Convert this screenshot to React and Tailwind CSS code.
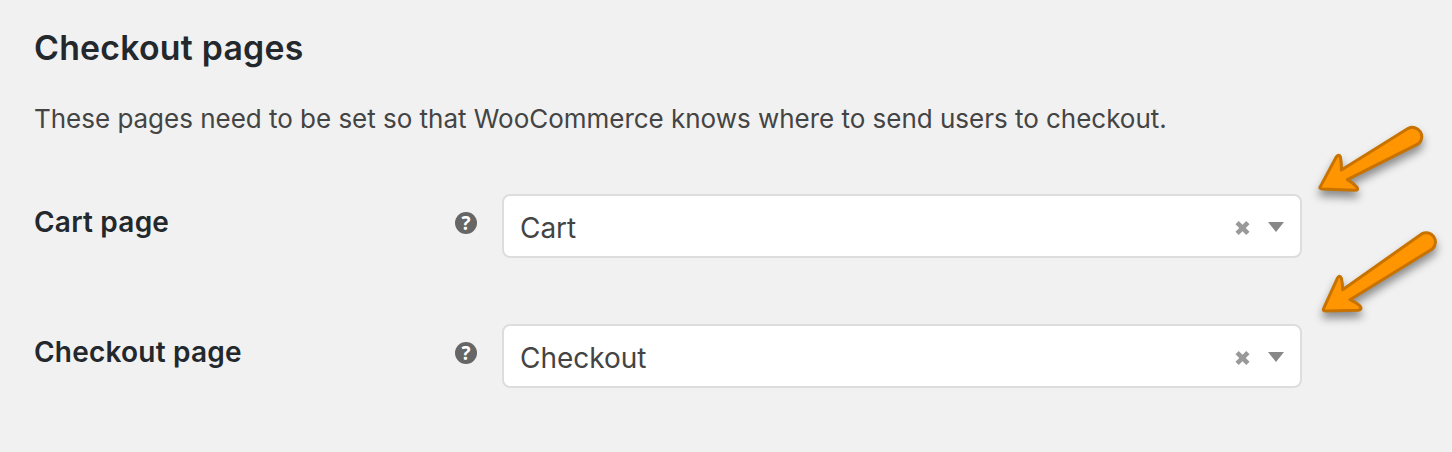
const rows = [
  { label: 'Cart page', value: 'Cart' },
  { label: 'Checkout page', value: 'Checkout' },
];

function HelpTip() {
  return (
    <span className="flex size-[22px] shrink-0 items-center justify-center rounded-full bg-[#666] font-['Open_Sans',sans-serif] text-[19px] leading-[22px] font-bold text-white">
      ?
    </span>
  );
}

function PageSelect({ value }) {
  return (
    <div className="flex h-16 w-[800px] shrink-0 items-center rounded-lg border-2 border-[#ddd] bg-white pl-4 pr-4">
      <span className="grow pt-1 text-[28px] leading-9 tracking-[-0.03px] text-[#444]">{value}</span>
      <svg className="mt-[3px] mr-[17px] h-4 w-4" viewBox="0 0 16 16" aria-label="Clear">
        <path d="M2.1 2.6L12.9 13.4M12.9 2.6L2.1 13.4" fill="none" stroke="#999" strokeWidth="4.6" />
      </svg>
      <svg className="mt-[2px] h-[10px] w-4" viewBox="0 0 16 10" aria-hidden="true">
        <path d="M0 0H16L8 10Z" fill="#888" />
      </svg>
    </div>
  );
}

function Arrow({ d, className }) {
  return (
    <svg className={`absolute overflow-visible drop-shadow-[0_6px_4px_rgba(0,0,0,0.42)] ${className}`} viewBox="0 0 456 330" aria-hidden="true">
      <path d={d} fill="#ff9500" stroke="#c87200" strokeWidth="9" strokeLinejoin="round" />
    </svg>
  );
}

export default function App() {
  return (
    <main className="relative h-[452px] w-[1452px] overflow-hidden bg-[#f1f1f1] pl-[34px] font-['Inter',sans-serif]">
      <h2 className="pt-[28px] text-[33.8px] leading-10 font-semibold tracking-[0.25px] text-[#23282d]">
        <span>Checkout pages</span>
      </h2>
      <p className="mt-[32px] text-[26px] leading-[38px] tracking-[-0.02px] text-[#444]">
        <span>These pages need to be set so that WooCommerce knows where to send users to checkout.</span>
      </p>
      <div className="mt-[56px] flex flex-col gap-[66px]">
        {rows.map((row) => (
          <div key={row.label} className="flex h-16 items-center">
            <div className="flex w-[468px] shrink-0 items-center justify-between pr-[25px] pb-[7px]">
              <span className="pb-[2px] text-[28px] leading-9 font-semibold tracking-[0.22px] text-[#23282d]">{row.label}</span>
              <HelpTip />
            </div>
            <PageSelect value={row.value} />
          </div>
        ))}
      </div>
      <Arrow
        className="top-[110px] left-[1300px] h-[110px] w-[152px]"
        d="M61 230L108 142Q116 130 121 140Q125 160 124 180L325 55A28 28 0 0 1 356 101L142 209Q160 219 170 231Q178 241 164 241L68 237Q56 236 61 230Z"
      />
      <Arrow
        className="top-[215px] left-[1300px] h-[110px] w-[152px]"
        d="M72 278L112 190Q119 178 124 189Q128 206 128 224L366 56A28 28 0 0 1 398 101L150 254Q168 262 179 272Q189 283 174 286L78 288Q66 288 72 278Z"
      />
    </main>
  );
}
